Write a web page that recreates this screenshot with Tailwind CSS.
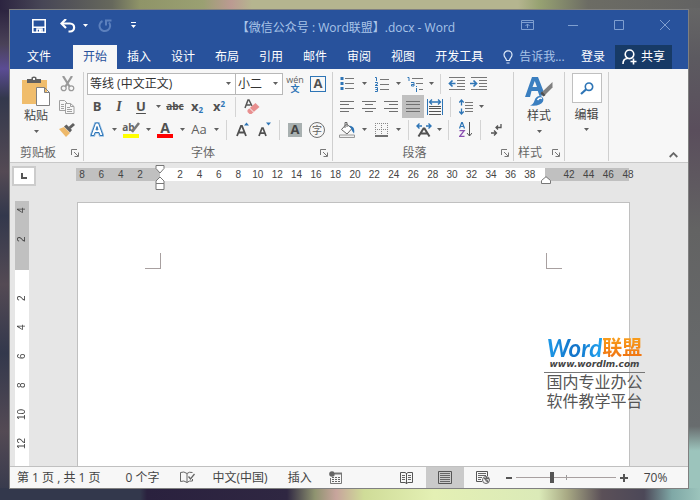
<!DOCTYPE html>
<html lang="zh-CN">
  <head>
    <meta charset="UTF-8" />
    <meta name="viewport" content="width=device-width, initial-scale=1.0" />
    <title>【微信公众号:Word联盟】.docx - Word</title>
    <script src="https://cdn.jsdelivr.net/npm/@tailwindcss/browser@4"></script>
  </head>
  <body
    class="relative h-screen overflow-hidden bg-[#33384c] pt-[9px] pr-[11px] pb-[11px] pl-[9px] font-['Open_Sans','Noto_Sans_CJK_SC',sans-serif] text-xs text-[#444444]"
  >
    <!-- Desktop wallpaper -->
    <svg
      class="absolute inset-0 -z-0 h-full w-full"
      viewBox="0 0 700 500"
      preserveAspectRatio="none"
      aria-hidden="true"
    >
      <defs>
        <linearGradient id="sky">
          <stop offset="0" stop-color="#2c2440" />
          <stop offset=".06" stop-color="#474656" />
          <stop offset=".16" stop-color="#66685c" />
          <stop offset=".2" stop-color="#8f9468" />
          <stop offset=".29" stop-color="#9aa072" />
          <stop offset=".33" stop-color="#bb9a92" />
          <stop offset=".36" stop-color="#b5b58f" />
          <stop offset=".74" stop-color="#b5b58f" />
          <stop offset=".77" stop-color="#97a272" />
          <stop offset=".84" stop-color="#6c6c64" />
          <stop offset="1" stop-color="#636363" />
        </linearGradient>
        <linearGradient id="ground">
          <stop offset="0" stop-color="#33384c" />
          <stop offset=".2" stop-color="#33384c" />
          <stop offset=".21" stop-color="#2a213e" />
          <stop offset=".41" stop-color="#2f2742" />
          <stop offset=".45" stop-color="#8f9470" />
          <stop offset=".48" stop-color="#c7a49c" />
          <stop offset=".52" stop-color="#cfdc98" />
          <stop offset=".62" stop-color="#e4f0b4" />
          <stop offset=".77" stop-color="#dbeab8" />
          <stop offset=".81" stop-color="#a8a984" />
          <stop offset=".86" stop-color="#5b5058" />
          <stop offset=".92" stop-color="#4c4858" />
          <stop offset=".96" stop-color="#7fa8a6" />
          <stop offset="1" stop-color="#9cc4bc" />
        </linearGradient>
        <linearGradient id="east" x2="0" y2="1">
          <stop offset="0" stop-color="#666666" />
          <stop offset=".1" stop-color="#5c5a60" />
          <stop offset=".25" stop-color="#5a4e5c" />
          <stop offset=".45" stop-color="#636363" />
          <stop offset=".85" stop-color="#686c6e" />
          <stop offset=".9" stop-color="#9cc4bc" />
          <stop offset="1" stop-color="#9cc4bc" />
        </linearGradient>
        <linearGradient id="west" x2="0" y2="1">
          <stop offset="0" stop-color="#2c2440" />
          <stop offset=".07" stop-color="#4a4258" />
          <stop offset=".12" stop-color="#5b4c94" />
          <stop offset=".18" stop-color="#33384c" />
          <stop offset=".33" stop-color="#544a54" />
          <stop offset=".42" stop-color="#33384c" />
          <stop offset=".56" stop-color="#544a54" />
          <stop offset=".7" stop-color="#33384c" />
          <stop offset=".86" stop-color="#544a54" />
          <stop offset="1" stop-color="#33384c" />
        </linearGradient>
      </defs>
      <rect width="700" height="12" fill="url(#sky)" />
      <rect y="10" width="12" height="490" fill="url(#west)" />
      <rect x="686" y="8" width="14" height="492" fill="url(#east)" />
      <rect y="488" width="700" height="12" fill="url(#ground)" />
    </svg>

    <!-- Small shapes used all over the ribbon -->
    <svg class="absolute h-0 w-0" aria-hidden="true">
      <symbol id="caret" viewBox="0 0 5 3"><path d="M0 0h5L2.500 3z" fill="currentColor" /></symbol>
      <symbol id="launcher" viewBox="0 0 8 8">
        <path d="M.5 6V.5H6M3 3l4 4M7.500 3.500v4h-4" fill="none" stroke="#777" />
      </symbol>
    </svg>

    <div class="relative flex h-full flex-col overflow-hidden border border-[#808080] bg-[#f7f7f7]">
      <!-- Title bar -->
      <header class="flex h-[35px] shrink-0 items-center bg-[#28529c] text-white">
        <div class="flex w-[178px] shrink-0 items-center pb-[4px] pl-[18px]">
          <button class="flex w-[22px] justify-center" aria-label="保存">
            <svg class="h-[14px] w-[14px]" viewBox="0 0 14 14">
              <path d="M.8.800h12.400v12.400H.800zM1 8.200h12M5 13v-3h5v3" fill="none" stroke="#fff" stroke-width="1.600" />
              <path d="M7 10h2v3H7z" fill="#fff" />
            </svg>
          </button>
          <button class="ml-[7px] flex w-[22px] justify-center" aria-label="撤消">
            <svg class="h-[14px] w-[16px]" viewBox="0 0 16 14">
              <path d="M2 4.500h8c5.500 0 5.500 8 0 8H8.500" fill="none" stroke="#fff" stroke-width="2.200" />
              <path d="M6 0 1.500 4.500 6 9" fill="none" stroke="#fff" stroke-width="2.200" />
            </svg>
          </button>
          <button class="flex w-[12px] justify-center" aria-label="撤消列表">
            <svg class="h-[3px] w-[5px]"><use href="#caret" /></svg>
          </button>
          <button class="ml-[3px] flex w-[22px] justify-center text-[#5c80bd]" aria-label="重复">
            <svg class="h-[14px] w-[14px]" viewBox="0 0 14 14">
              <path d="M4.500 2A5.300 5.300 0 1 0 11 3.500M8 6.500V1.500h5.500" fill="none" stroke="currentColor" stroke-width="2" />
            </svg>
          </button>
          <button class="ml-[6px] flex w-[22px] justify-center" aria-label="自定义快速访问工具栏">
            <svg class="h-[7px] w-[5px]" viewBox="0 0 5 7">
              <path d="M0 0h5v1H0zM0 3h5L2.500 6z" fill="#fff" />
            </svg>
          </button>
        </div>
        <h1 class="flex-1 text-center whitespace-nowrap text-[#a9c4e8]">【微信公众号 : Word联盟】.docx - Word</h1>
        <div class="flex shrink-0 self-stretch pb-[6px] text-[#7f9fd0]">
          <button class="flex w-[46px] items-center justify-center" aria-label="功能区显示选项">
            <svg class="h-[10px] w-[13px]" viewBox="0 0 13 10">
              <path d="M.5.500h12v9H.500zM.5 2.500h12M6.500 8V4M4.500 6l2-2 2 2" fill="none" stroke="currentColor" />
            </svg>
          </button>
          <button class="flex w-[46px] items-center justify-center" aria-label="最小化">
            <svg class="h-[10px] w-[10px]" viewBox="0 0 10 10"><path d="M0 5.500h10" stroke="currentColor" /></svg>
          </button>
          <button class="flex w-[46px] items-center justify-center" aria-label="最大化">
            <svg class="h-[10px] w-[10px]" viewBox="0 0 10 10">
              <path d="M.5.500h9v9H.500z" fill="none" stroke="currentColor" />
            </svg>
          </button>
          <button class="flex w-[46px] items-center justify-center" aria-label="关闭">
            <svg class="h-[10px] w-[10px]" viewBox="0 0 10 10"><path d="m0 0 10 10M10 0 0 10" stroke="currentColor" /></svg>
          </button>
        </div>
      </header>

      <!-- Ribbon tabs -->
      <nav class="flex h-[24px] shrink-0 items-stretch bg-[#28529c] pr-[16px] whitespace-nowrap text-white">
        <button class="w-[63px] pr-[5px]">文件</button>
        <button class="bg-[#f7f7f7] px-[10px] text-[#28529c]">开始</button>
        <button class="px-[10px]">插入</button>
        <button class="px-[10px]">设计</button>
        <button class="px-[10px]">布局</button>
        <button class="px-[10px]">引用</button>
        <button class="px-[10px]">邮件</button>
        <button class="px-[10px]">审阅</button>
        <button class="px-[10px]">视图</button>
        <button class="px-[10px]">开发工具</button>
        <button class="flex items-center gap-[6px] pl-[10px] text-[#a9c4e8]">
          <svg class="h-[14px] w-[10px]" viewBox="0 0 10 14">
            <path
              d="M3.500 10.500C3.500 8 1 7.500 1 4.800a4 4 0 0 1 8 0C9 7.500 6.500 8 6.500 10.500zM3.500 13h3"
              fill="none"
              stroke="#dce8f8"
              stroke-width="1.200"
            />
          </svg>
          告诉我...
        </button>
        <button class="ml-auto px-[10px]">登录</button>
        <button class="flex items-center gap-[4px] bg-[#173a66] px-[7px]">
          <svg class="h-[16px] w-[15px]" viewBox="0 0 15 16">
            <path
              d="M1 15c0-3.500 2-5.500 4.500-5.500M7.500 1a4.300 4.300 0 1 1 0 8.600 4.300 4.300 0 0 1 0-8.600zM11.500 9.500v6M8.500 12.500h6"
              fill="none"
              stroke="#fff"
              stroke-width="1.600"
            />
          </svg>
          共享
        </button>
      </nav>

      <!-- Ribbon -->
      <section class="flex h-[94px] shrink-0 border-b border-[#c8c8c8] bg-[#f7f7f7] pt-[3px] pb-px">
        <!-- Clipboard -->
        <div class="flex w-[74px] shrink-0 flex-col justify-between border-r border-[#cfcfcf]">
          <div class="flex h-[69px]">
            <button class="flex w-[46px] flex-col items-center pt-[4px] pl-[6px]">
              <svg class="h-[31px] w-[29px]" viewBox="0 0 29 31">
                <path d="M0 4h25v24H0z" fill="#f0bd6c" />
                <path d="M5 7V3h4.500V1.500Q12 -.5 14.500 1.500V3H19v4z" fill="#606060" />
                <path d="M11 2h2v2h-2z" fill="#f7f7f7" />
                <path d="M14.500 11.500h8l5 5v13h-13zM22.500 11.500v5h5" fill="#fff" stroke="#808080" />
              </svg>
              <span class="leading-[18px]">粘贴</span>
              <svg class="mt-[5px] h-[3px] w-[5px] text-[#606060]"><use href="#caret" /></svg>
            </button>
            <div class="flex w-[22px] flex-col">
              <button class="flex h-[23px] items-center justify-center" aria-label="剪切">
                <svg class="h-[16px] w-[15px]" viewBox="0 0 15 16">
                  <path d="m3 0 6.500 10.500M12 0 5.500 10.500" stroke="#9a9a9a" stroke-width="2.200" />
                  <path
                    d="M3.700 9.800a2.400 2.400 0 1 1 0 4.900 2.400 2.400 0 0 1 0-4.900zM11.300 9.800a2.400 2.400 0 1 1 0 4.900 2.400 2.400 0 0 1 0-4.900z"
                    fill="none"
                    stroke="#9a9a9a"
                    stroke-width="1.300"
                  />
                </svg>
              </button>
              <button class="flex h-[23px] items-center justify-center" aria-label="复制">
                <svg class="h-[14px] w-[16px]" viewBox="0 0 16 14">
                  <path d="M.5.500h5l3 3v7h-8z" fill="#f7f7f7" stroke="#a0a0a0" />
                  <path d="M2 4.500h3M2 6.500h3M2 8.500h3" stroke="#a0a0a0" />
                  <path d="M6.500 3.500h5l3.500 3v7H6.500zM11.500 3.500v3H15M8 7.500h3M8 9.500h5M8 11.500h5" fill="#f7f7f7" stroke="#a0a0a0" />
                </svg>
              </button>
              <button class="flex h-[23px] items-center justify-center" aria-label="格式刷">
                <svg class="h-[14px] w-[16px]" viewBox="0 0 16 14">
                  <path d="m0 6 5-2 6 6-4 4z" fill="#eeb96a" />
                  <path d="m5 3.500 2.500-2 5.500 5.500-2 2.500z" fill="#606060" />
                  <path d="m9.500 4 4.500-4 2 2-4.500 4z" fill="#606060" />
                </svg>
              </button>
            </div>
          </div>
          <div class="flex items-center justify-between pr-[4px] pl-[10px] leading-[16px] text-[#666666]">
            剪贴板
            <button aria-label="剪贴板设置"><svg class="h-[8px] w-[8px]"><use href="#launcher" /></svg></button>
          </div>
        </div>

        <!-- Font -->
        <div class="flex w-[249px] shrink-0 flex-col justify-between border-r border-[#cfcfcf] pl-[2px]">
          <div class="text-[#606060]">
            <div class="flex h-[23px] items-center">
              <div class="relative ml-px flex h-[22px] w-[149px] items-center">
                <select
                  class="h-full w-full appearance-none border border-[#b8b8b8] bg-white pl-[2px] text-xs text-[#333333]"
                  aria-label="字体"
                >
                  <option>等线 (中文正文)</option>
                </select>
                <svg class="pointer-events-none absolute right-[5px] h-[3px] w-[5px]"><use href="#caret" /></svg>
              </div>
              <div class="relative -ml-px flex h-[22px] w-[48px] items-center">
                <select
                  class="h-full w-full appearance-none border border-[#b8b8b8] bg-white pl-[2px] text-xs text-[#333333]"
                  aria-label="字号"
                >
                  <option>小二</option>
                </select>
                <svg class="pointer-events-none absolute right-[5px] h-[3px] w-[5px]"><use href="#caret" /></svg>
              </div>
              <button class="flex w-[24px] flex-col items-center text-[9px] leading-[9px]" aria-label="拼音指南">
                <span>wén</span><span class="font-bold text-[#2e75b6]">文</span>
              </button>
              <button class="flex w-[22px] items-center justify-center" aria-label="字符边框">
                <span
                  class="flex h-[16px] w-[16px] items-center justify-center border border-[#2e75b6] text-[13px] leading-none font-bold text-[#505050]"
                  >A</span
                >
              </button>
            </div>
            <div class="flex h-[23px] items-center font-bold text-[#505050]">
              <button class="w-[22px] text-[13px]">B</button>
              <button class="w-[22px] font-['Liberation_Serif',serif] text-sm italic">I</button>
              <button class="w-[22px] text-[13px] underline underline-offset-2">U</button>
              <button class="flex w-[12px] justify-center" aria-label="下划线样式">
                <svg class="h-[3px] w-[5px] text-[#606060]"><use href="#caret" /></svg>
              </button>
              <button class="w-[22px] text-[10px] line-through">abc</button>
              <button class="w-[22px] text-[13px] leading-none" aria-label="下标">
                x<sub class="text-[8px] text-[#2e75b6]">2</sub>
              </button>
              <button class="w-[22px] text-[13px] leading-none" aria-label="上标">
                x<sup class="text-[8px] text-[#2e75b6]">2</sup>
              </button>
              <span class="mx-[5px] h-[20px] w-px bg-[#d4d4d4]"></span>
              <button class="flex w-[22px] justify-center" aria-label="清除所有格式">
                <svg class="h-[16px] w-[16px]" viewBox="0 0 16 16">
                  <path d="m1 9 3-8h1l3 6M2.500 6h4" fill="none" stroke="#555" stroke-width="1.500" />
                  <path d="m3.500 11 8-7 4 4-8 7H5.500l-2-2z" fill="#e88f8f" />
                  <path d="m5.500 9 4 4" stroke="#f7f7f7" />
                </svg>
              </button>
            </div>
            <div class="flex h-[23px] items-center">
              <button class="flex w-[22px] justify-center" aria-label="文本效果">
                <svg class="h-[15px] w-[14px]" viewBox="0 0 14 15">
                  <path d="M1 13.500 5.500 1h3L13 13.500h-3L9 10.500H5L4 13.500zM6 7.800h2L7 4.500z" fill="#fff" stroke="#9cc3e6" stroke-width="2.500" />
                  <path d="M1 13.500 5.500 1h3L13 13.500h-3L9 10.500H5L4 13.500zM6 7.800h2L7 4.500z" fill="#fff" stroke="#2e75b6" />
                </svg>
              </button>
              <button class="flex w-[12px] justify-center" aria-label="文本效果选项">
                <svg class="h-[3px] w-[5px]"><use href="#caret" /></svg>
              </button>
              <button class="flex w-[22px] flex-col items-center" aria-label="突出显示颜色">
                <span class="flex h-[12px] items-center text-[10px] font-bold">
                  ab
                  <svg class="-ml-[5px] h-[12px] w-[10px]" viewBox="0 0 10 12"><path d="M9 1 2 10" stroke="#777" stroke-width="2.500" /></svg>
                </span>
                <span class="h-[4px] w-[16px] bg-[#ffff00]"></span>
              </button>
              <button class="flex w-[12px] justify-center" aria-label="突出显示选项">
                <svg class="h-[3px] w-[5px]"><use href="#caret" /></svg>
              </button>
              <button class="flex w-[22px] flex-col items-center" aria-label="字体颜色">
                <span class="h-[12px] text-sm leading-[12px] font-bold text-[#505050]">A</span>
                <span class="h-[4px] w-[16px] bg-[#ff0000]"></span>
              </button>
              <button class="flex w-[12px] justify-center" aria-label="字体颜色选项">
                <svg class="h-[3px] w-[5px]"><use href="#caret" /></svg>
              </button>
              <button class="w-[22px] text-[13px]" aria-label="更改大小写">Aa</button>
              <button class="flex w-[12px] justify-center" aria-label="大小写选项">
                <svg class="h-[3px] w-[5px]"><use href="#caret" /></svg>
              </button>
              <span class="mx-[4px] h-[20px] w-px shrink-0 bg-[#d4d4d4]"></span>
              <button class="flex w-[22px] justify-center" aria-label="增大字号">
                <svg class="h-[15px] w-[13px]" viewBox="0 0 13 15">
                  <path d="m1 14 4-10h1l4 10M2.500 10.500h6" fill="none" stroke="#505050" stroke-width="1.800" />
                  <path d="M8 3.500 10.500.5 13 3.500z" fill="#2e75b6" />
                </svg>
              </button>
              <button class="flex w-[22px] justify-center" aria-label="减小字号">
                <svg class="h-[15px] w-[13px]" viewBox="0 0 13 15">
                  <path d="m1 14 3-8h1l3 8M2.200 11.200h4.600" fill="none" stroke="#505050" stroke-width="1.700" />
                  <path d="M8 .5h5L10.500 3.500z" fill="#2e75b6" />
                </svg>
              </button>
              <span class="mx-[4px] h-[20px] w-px shrink-0 bg-[#d4d4d4]"></span>
              <button class="flex w-[22px] justify-center" aria-label="字符底纹">
                <span
                  class="flex h-[14px] w-[14px] items-center justify-center bg-[#a8b0b0] text-[13px] leading-none font-bold text-[#444444]"
                  >A</span
                >
              </button>
              <button class="flex w-[22px] justify-center" aria-label="带圈字符">
                <span class="flex h-[16px] w-[16px] items-center justify-center rounded-full border border-[#707070] text-[10px] leading-none">字</span>
              </button>
            </div>
          </div>
          <div class="flex items-center pr-[4px] leading-[16px] text-[#666666]">
            <span class="flex-1 text-center">字体</span>
            <button aria-label="字体设置"><svg class="h-[8px] w-[8px]"><use href="#launcher" /></svg></button>
          </div>
        </div>

        <!-- Paragraph -->
        <div class="flex w-[181px] shrink-0 flex-col justify-between border-r border-[#cfcfcf] pl-[3px]">
          <div class="text-[#606060]">
            <div class="flex h-[23px] items-center">
              <button class="flex w-[22px] justify-center" aria-label="项目符号">
                <svg class="h-[15px] w-[14px]" viewBox="0 0 14 15">
                  <path d="M5 2.500h9M5 7.500h9M5 12.500h9" stroke="#777" />
                  <path d="M.5 1h3v3h-3zM.5 6h3v3h-3zM.5 11h3v3h-3z" fill="#2e75b6" />
                </svg>
              </button>
              <button class="flex w-[12px] justify-center" aria-label="项目符号选项">
                <svg class="h-[3px] w-[5px]"><use href="#caret" /></svg>
              </button>
              <button class="flex w-[22px] justify-center" aria-label="编号">
                <svg class="h-[16px] w-[15px]" viewBox="0 0 15 16">
                  <path d="M6 3.500h9M6 8.500h9M6 13.500h9" stroke="#777" />
                  <path
                    d="M1 1.500h1.500V5M1 6.500h2.500v1.300L1 9.500h3M1 11.500h2.500v4H1M1.500 13.500h2"
                    fill="none"
                    stroke="#2e75b6"
                  />
                </svg>
              </button>
              <button class="flex w-[12px] justify-center" aria-label="编号选项">
                <svg class="h-[3px] w-[5px]"><use href="#caret" /></svg>
              </button>
              <button class="flex w-[22px] justify-center" aria-label="多级列表">
                <svg class="h-[16px] w-[16px]" viewBox="0 0 16 16">
                  <path d="M5 2.500h11M9 7.500h7M12 13.500h4" stroke="#777" />
                  <path d="M.5 1.500H2V5M4 6.500h3v3.500H4.500V8.500H7M9.500 12v4M9.500 10v1" fill="none" stroke="#2e75b6" />
                </svg>
              </button>
              <button class="flex w-[10px] justify-center" aria-label="多级列表选项">
                <svg class="h-[3px] w-[5px]"><use href="#caret" /></svg>
              </button>
              <span class="mx-[4px] h-[20px] w-px bg-[#d4d4d4]"></span>
              <button class="flex w-[22px] justify-center" aria-label="减少缩进量">
                <svg class="h-[13px] w-[17px]" viewBox="0 0 17 13">
                  <path d="M1 .5h16M9 3.500h8M9 6.500h8M9 9.500h8M1 12.500h16" stroke="#777" />
                  <path d="M7.500 6.500H2M4.500 3.500l-3 3 3 3" fill="none" stroke="#2e75b6" stroke-width="1.700" />
                </svg>
              </button>
              <button class="flex w-[22px] justify-center" aria-label="增加缩进量">
                <svg class="h-[13px] w-[17px]" viewBox="0 0 17 13">
                  <path d="M1 .5h16M9 3.500h8M9 6.500h8M9 9.500h8M1 12.500h16" stroke="#777" />
                  <path d="M0 6.500h6M3.500 3.500l3 3-3 3" fill="none" stroke="#2e75b6" stroke-width="1.700" />
                </svg>
              </button>
            </div>
            <div class="flex h-[23px] items-center">
              <button class="flex w-[22px] justify-center" aria-label="左对齐">
                <svg class="h-[11px] w-[14px]" viewBox="0 0 14 11">
                  <path d="M0 .5h14M0 3.500h9M0 7.500h14M0 10.500h9" stroke="#707070" />
                </svg>
              </button>
              <button class="flex w-[22px] justify-center" aria-label="居中">
                <svg class="h-[11px] w-[14px]" viewBox="0 0 14 11">
                  <path d="M0 .5h14M3 3.500h8M0 7.500h14M3 10.500h8" stroke="#707070" />
                </svg>
              </button>
              <button class="flex w-[22px] justify-center" aria-label="右对齐">
                <svg class="h-[11px] w-[14px]" viewBox="0 0 14 11">
                  <path d="M0 .5h14M5 3.500h9M0 7.500h14M5 10.500h9" stroke="#707070" />
                </svg>
              </button>
              <button class="flex h-full w-[22px] items-center justify-center bg-[#c0c0c0]" aria-label="两端对齐">
                <svg class="h-[11px] w-[14px]" viewBox="0 0 14 11">
                  <path d="M0 .5h14M0 3.500h14M0 7.500h14M0 10.500h14" stroke="#707070" />
                </svg>
              </button>
              <button class="flex w-[22px] justify-center" aria-label="分散对齐">
                <svg class="h-[16px] w-[16px]" viewBox="0 0 16 16">
                  <path d="M.5 0v16M15.500 0v16" stroke="#2e75b6" />
                  <path d="M2.500 3h11M5 .500 2.500 3 5 5.500M11 .500 13.500 3 11 5.500" fill="none" stroke="#2e75b6" stroke-width="1.300" />
                  <path d="M2 7.500h12M2 9.500h12M2 12.500h12M2 15.500h12" stroke="#555" />
                </svg>
              </button>
              <span class="mx-[4px] h-[20px] w-px bg-[#d4d4d4]"></span>
              <button class="flex w-[22px] justify-center" aria-label="行和段落间距">
                <svg class="h-[16px] w-[14px]" viewBox="0 0 14 16">
                  <path d="M6 3.500h8M6 6.500h8M6 9.500h8M6 12.500h8" stroke="#777" />
                  <path d="M2.500 1v5.500M.3 3.500 2.500 1l2.200 2.500M2.500 9.500V15M.3 12.500l2.200 2.500 2.200-2.500" fill="none" stroke="#2e75b6" stroke-width="1.300" />
                </svg>
              </button>
              <button class="flex w-[8px] justify-center" aria-label="行距选项">
                <svg class="h-[3px] w-[5px]"><use href="#caret" /></svg>
              </button>
            </div>
            <div class="flex h-[23px] items-center">
              <button class="flex w-[22px] justify-center" aria-label="底纹">
                <svg class="h-[16px] w-[16px]" viewBox="0 0 16 16">
                  <path d="m2.500 7.500 5-5.500 5.500 4.500-5 5.500zM6 6V.500h2V5" fill="#fff" stroke="#666" />
                  <path d="M10.500 3.500q6 1 4.500 8-2-2-3-5z" fill="#2e75b6" />
                  <path d="M.5 13h15v2.500H.500z" fill="#f0f0f0" stroke="#999" />
                </svg>
              </button>
              <button class="flex w-[12px] justify-center" aria-label="底纹选项">
                <svg class="h-[3px] w-[5px]"><use href="#caret" /></svg>
              </button>
              <button class="flex w-[22px] justify-center" aria-label="边框">
                <svg class="h-[14px] w-[13px]" viewBox="0 0 13 14">
                  <path d="M0 .5h13M0 6.500h13M.5 0v12M6.500 0v12M12.500 0v12" fill="none" stroke="#888" stroke-dasharray="1 1" />
                  <path d="M0 13h13" stroke="#444" stroke-width="1.500" />
                </svg>
              </button>
              <button class="flex w-[12px] justify-center" aria-label="边框选项">
                <svg class="h-[3px] w-[5px]"><use href="#caret" /></svg>
              </button>
              <span class="mx-[4px] h-[20px] w-px shrink-0 bg-[#d4d4d4]"></span>
              <button class="flex w-[22px] justify-center" aria-label="中文版式">
                <svg class="h-[14px] w-[16px]" viewBox="0 0 16 14">
                  <path d="m2.500 13.500 5-8h1l5 8M4.500 10.500h7" fill="none" stroke="#505050" stroke-width="2" />
                  <path d="M6 3H1M3.500.5 1 3l2.500 2.500M10 3h5M12.500.5 15 3l-2.500 2.500" fill="none" stroke="#2e75b6" stroke-width="1.400" />
                </svg>
              </button>
              <button class="flex w-[8px] justify-center" aria-label="中文版式选项">
                <svg class="h-[3px] w-[5px]"><use href="#caret" /></svg>
              </button>
              <span class="mx-[5px] h-[20px] w-px shrink-0 bg-[#d4d4d4]"></span>
              <button class="flex w-[22px] justify-center" aria-label="排序">
                <svg class="h-[15px] w-[13px]" viewBox="0 0 13 15">
                  <path d="m.5 6.500 2.200-6h.6l2.200 6M1.500 4.500h3" fill="none" stroke="#2e75b6" stroke-width="1.200" />
                  <path d="M.5 8.700h4.700L.700 14.300h4.800" fill="none" stroke="#8a4fb0" stroke-width="1.300" />
                  <path d="M10.500 0v14M8 11l2.500 3L13 11" fill="none" stroke="#555" />
                </svg>
              </button>
              <span class="mx-[4px] h-[20px] w-px shrink-0 bg-[#d4d4d4]"></span>
              <button class="flex w-[22px] justify-center" aria-label="显示编辑标记">
                <svg class="h-[12px] w-[11px]" viewBox="0 0 11 12">
                  <path d="M10 0v3.500H5M7 1.500l-2 2 2 2M0 9h5M3 6.500 5.500 9 3 11.500" fill="none" stroke="#555" stroke-width="1.300" />
                </svg>
              </button>
            </div>
          </div>
          <div class="flex items-center pr-[4px] leading-[16px] text-[#666666]">
            <span class="flex-1 pr-[8px] text-center">段落</span>
            <button aria-label="段落设置"><svg class="h-[8px] w-[8px]"><use href="#launcher" /></svg></button>
          </div>
        </div>

        <!-- Styles -->
        <div class="flex w-[51px] shrink-0 flex-col justify-between border-r border-[#cfcfcf]">
          <button class="flex flex-col items-center pt-[4px]">
            <svg class="h-[31px] w-[28px]" viewBox="0 0 28 31">
              <path d="M0 21 7 1h6l7 18-5.500 1-1.700-5H6.500L5 21zM7.500 11h4.500L9.800 5z" fill="#3b7fc0" />
              <path d="M27.500 6v5.500L19 20l-3-3z" fill="#808080" />
              <path d="m17 15.500 3.500 3.500-2 1.500-3-3z" fill="#505050" />
              <path d="M5 29.500q3.500-1 4.500-5 1.500-5 6-4.500 4 1.500 2.500 5.500-2.500 5-13 4z" fill="#3b7fc0" />
              <path d="M12.500 24q2-3 4.500-1.500" fill="none" stroke="#fff" stroke-width="1.500" />
            </svg>
            <span class="leading-[18px]">样式</span>
            <svg class="mt-[5px] h-[3px] w-[5px] text-[#606060]"><use href="#caret" /></svg>
          </button>
          <div class="flex items-center justify-between px-[4px] leading-[16px] text-[#666666]">
            样式
            <button aria-label="样式设置"><svg class="h-[8px] w-[8px]"><use href="#launcher" /></svg></button>
          </div>
        </div>

        <!-- Editing -->
        <div class="w-[44px] shrink-0 border-r border-[#cfcfcf]">
          <button class="flex w-full flex-col items-center pt-px">
            <span class="flex h-[30px] w-[30px] items-center justify-center border border-[#c0c0c0] bg-white">
              <svg class="h-[13px] w-[14px]" viewBox="0 0 14 13">
                <path d="M9 1a3.700 3.700 0 1 1 0 7.400A3.700 3.700 0 0 1 9 1z" fill="none" stroke="#2e75b6" stroke-width="1.600" />
                <path d="M6.500 7 1 12" stroke="#2e75b6" stroke-width="2.200" />
              </svg>
            </span>
            <span class="mt-[3px] leading-[18px]">编辑</span>
            <svg class="mt-[4px] h-[3px] w-[5px] text-[#606060]"><use href="#caret" /></svg>
          </button>
        </div>
        <div class="flex flex-1 items-end justify-end pr-[10px] pb-[3px]">
          <button aria-label="折叠功能区">
            <svg class="h-[6px] w-[9px]" viewBox="0 0 9 6">
              <path d="m.7 5 3.800-3.800L8.300 5" fill="none" stroke="#666" stroke-width="1.800" />
            </svg>
          </button>
        </div>
      </section>

      <!-- Document area -->
      <main class="relative flex min-h-0 flex-1 flex-col overflow-hidden bg-[#e6e6e6]">
        <!-- Horizontal ruler -->
        <div
          class="flex h-[38px] shrink-0 items-start pt-[3px] pr-[59px] pl-[2px] font-['Liberation_Sans',sans-serif] text-[10px] leading-[13px]"
        >
          <button
            class="flex h-[20px] w-[24px] items-center justify-center border-2 border-[#cccccc] bg-white"
            aria-label="制表符"
          >
            <svg class="h-[6px] w-[6px]" viewBox="0 0 6 6"><path d="M1 0v5h5" fill="none" stroke="#555" stroke-width="2" /></svg>
          </button>
          <div class="mt-[2px] ml-[40px] flex h-[13px] flex-1 text-center">
            <div class="relative z-10 flex w-[84px] justify-between bg-[#c0c0c0] pr-[14px]">
              <span class="w-[12px]">8</span><span class="w-[12px]">6</span><span class="w-[12px]">4</span
              ><span class="w-[12px]">2</span>
              <svg class="absolute -top-[3px] -right-[5px] h-[26px] w-[10px]" viewBox="0 0 10 26">
                <path
                  d="M1 .5h8v3L5 8 1 3.500zM5 12l4 4v2.500H1V16zM1 18.500h8v6H1z"
                  fill="#fff"
                  stroke="#777"
                />
              </svg>
            </div>
            <div class="flex flex-1 justify-between bg-white pr-[9px] pl-[14px]">
              <span class="w-[12px]">2</span><span class="w-[12px]">4</span><span class="w-[12px]">6</span
              ><span class="w-[12px]">8</span><span class="w-[12px]">10</span><span class="w-[12px]">12</span
              ><span class="w-[12px]">14</span><span class="w-[12px]">16</span><span class="w-[12px]">18</span
              ><span class="w-[12px]">20</span><span class="w-[12px]">22</span><span class="w-[12px]">24</span
              ><span class="w-[12px]">26</span><span class="w-[12px]">28</span><span class="w-[12px]">30</span
              ><span class="w-[12px]">32</span><span class="w-[12px]">34</span><span class="w-[12px]">36</span
              ><span class="w-[12px]">38</span>
            </div>
            <div class="relative w-[84px] bg-[#c0c0c0] pl-[18px]">
              <svg class="absolute top-[8px] -left-[4px] h-[8px] w-[10px]" viewBox="0 0 10 8">
                <path d="M5 .700 9.500 4.500v3h-9v-3z" fill="#fff" stroke="#777" />
              </svg>
              <div class="-mr-[5px] flex justify-between">
                <span class="w-[12px]">42</span><span class="w-[12px]">44</span><span class="w-[12px]">46</span
                ><span class="w-[12px]">48</span>
              </div>
            </div>
          </div>
        </div>

        <div class="flex min-h-0 flex-1 pr-[58px] pl-[5px]">
          <!-- Vertical ruler -->
          <div
            class="flex w-[14px] shrink-0 flex-col font-['Liberation_Sans',sans-serif] text-[10px] leading-[14px]"
          >
            <div class="flex h-[69px] shrink-0 flex-col bg-[#c0c0c0]">
              <span class="h-[18px] rotate-180 text-center [writing-mode:vertical-rl]">4</span>
              <span class="mt-[6px] h-[29px] rotate-180 text-center [writing-mode:vertical-rl]">2</span>
            </div>
            <div class="flex flex-1 flex-col bg-white pt-[14px]">
              <span class="h-[29px] rotate-180 text-center [writing-mode:vertical-rl]">2</span>
              <span class="h-[29px] rotate-180 text-center [writing-mode:vertical-rl]">4</span>
              <span class="h-[29px] rotate-180 text-center [writing-mode:vertical-rl]">6</span>
              <span class="h-[29px] rotate-180 text-center [writing-mode:vertical-rl]">8</span>
              <span class="h-[29px] rotate-180 text-center [writing-mode:vertical-rl]">10</span>
              <span class="h-[29px] rotate-180 text-center [writing-mode:vertical-rl]">12</span>
            </div>
          </div>
          <!-- Page -->
          <article
            class="mt-px ml-[48px] flex flex-1 items-start justify-between border border-b-0 border-[#c0c0c0] bg-white px-[67px] pt-[50px]"
          >
            <span class="h-[16px] w-[16px] border-r border-b border-[#a8a0a0]"></span>
            <span class="h-[16px] w-[16px] border-b border-l border-[#a8a0a0]"></span>
          </article>
        </div>

        <!-- Watermark -->
        <div class="absolute right-[43px] bottom-[55px] w-[101px] whitespace-nowrap">
          <div class="flex items-center justify-center font-bold">
            <span
              class="bg-linear-to-r from-[#1f9ae8] via-[#1272c8] to-[#22a4f0] bg-clip-text font-['Lato',sans-serif] text-2xl leading-[24px] text-transparent italic"
              >Word</span
            >
            <span class="bg-linear-to-b from-[#f9a11c] to-[#ee6c10] bg-clip-text text-xl leading-[24px] text-transparent"
              >联盟</span
            >
          </div>
          <div
            class="border-b border-[#777777] pb-[3px] text-center font-['DejaVu_Sans',sans-serif] text-[9px] leading-[9px] font-bold text-[#444444] italic"
          >
            www.wordlm.com
          </div>
          <p class="text-center text-base leading-[19px] text-[#555555]">国内专业办公<br />软件教学平台</p>
        </div>
      </main>

      <!-- Status bar -->
      <footer class="flex h-[22px] shrink-0 items-center border-t border-[#c0c0c0] bg-[#f7f7f7] pl-[7px] whitespace-nowrap">
        <span>第 1 页 , 共 1 页</span>
        <span class="ml-[25px]">0 个字</span>
        <button class="ml-[20px]" aria-label="校对">
          <svg class="h-[13px] w-[15px]" viewBox="0 0 15 13">
            <path d="M7 2.500Q4 0 .5 1.500v9Q4 9 7 11.500Q9 9.500 12.500 10V8M7 2.500v9M7 2.500Q9 .5 12.500 1.500" fill="none" stroke="#666" />
            <path d="m8.500 5.500 2 2.500 4-5" fill="none" stroke="#666" stroke-width="1.300" />
          </svg>
        </button>
        <button class="ml-[18px]">中文(中国)</button>
        <button class="ml-[20px]">插入</button>
        <button class="ml-[17px]" aria-label="宏">
          <svg class="h-[13px] w-[13px]" viewBox="0 0 13 13">
            <path d="M5 2.500h7.500v10h-11V7" fill="none" stroke="#777" />
            <path d="M6 2.500h7" stroke="#777" stroke-width="2" />
            <path d="M3 6.500h8M3 8.500h8M3 10.500h8" stroke="#666" stroke-dasharray="2 1" />
            <circle cx="3" cy="3" r="2.800" fill="#666" />
          </svg>
        </button>
        <div class="ml-auto flex h-full items-center">
          <button class="flex w-[39px] justify-center" aria-label="阅读视图">
            <svg class="h-[12px] w-[13px]" viewBox="0 0 13 12">
              <path d="M.5.500h4.500l1.500 1 1.500-1h4.500v10H8l-1.500 1-1.500-1H.500zM6.500 1v11" fill="none" stroke="#555" />
              <path d="M2 3.500h3M2 5.500h3M2 7.500h3M8 3.500h3M8 5.500h3M8 7.500h3" stroke="#666" />
            </svg>
          </button>
          <button class="flex h-full w-[38px] items-center justify-center bg-[#cacaca]" aria-label="页面视图">
            <svg class="h-[13px] w-[14px]" viewBox="0 0 14 13">
              <path d="M.5.500h13v12H.500z" fill="none" stroke="#555" />
              <path d="M2 2.500h10M2 4.500h10M2 6.500h10M2 8.500h10M2 10.500h10" stroke="#666" />
            </svg>
          </button>
          <button class="flex w-[38px] justify-center" aria-label="Web 版式视图">
            <svg class="h-[13px] w-[14px]" viewBox="0 0 14 13">
              <path d="M6 10.500H.500V.500h11V5" fill="none" stroke="#555" />
              <path d="M2 2.500h8M2 4.500h8M2 6.500h4M2 8.500h3" stroke="#666" />
              <circle cx="10" cy="9" r="3.500" fill="#f7f7f7" stroke="#666" />
              <path d="M8 7.500q2 0 2 1.500t1.500 1l.5 1.500M10 6l1 1.500h2" fill="none" stroke="#666" stroke-width="1.400" />
            </svg>
          </button>
          <button class="flex w-[14px] justify-center" aria-label="缩小">
            <svg class="h-[8px] w-[6px]" viewBox="0 0 6 8"><path d="M0 4h6" stroke="#555" stroke-width="2" /></svg>
          </button>
          <div class="relative flex w-[100px] items-center">
            <span class="absolute left-1/2 h-[5px] w-px bg-[#999999]"></span>
            <input
              type="range"
              min="0"
              max="200"
              value="70"
              aria-label="缩放"
              class="relative h-[11px] w-full appearance-none bg-transparent [&::-webkit-slider-runnable-track]:h-px [&::-webkit-slider-runnable-track]:bg-[#a8a0a0] [&::-webkit-slider-thumb]:-mt-[5px] [&::-webkit-slider-thumb]:h-[11px] [&::-webkit-slider-thumb]:w-[4px] [&::-webkit-slider-thumb]:appearance-none [&::-webkit-slider-thumb]:bg-[#555555]"
            />
          </div>
          <button class="flex w-[16px] justify-center" aria-label="放大">
            <svg class="h-[8px] w-[8px]" viewBox="0 0 8 8"><path d="M0 4h8M4 0v8" stroke="#555" stroke-width="2" /></svg>
          </button>
          <button class="w-[56px] pr-[9px] text-center">70%</button>
        </div>
      </footer>
    </div>
  </body>
</html>
